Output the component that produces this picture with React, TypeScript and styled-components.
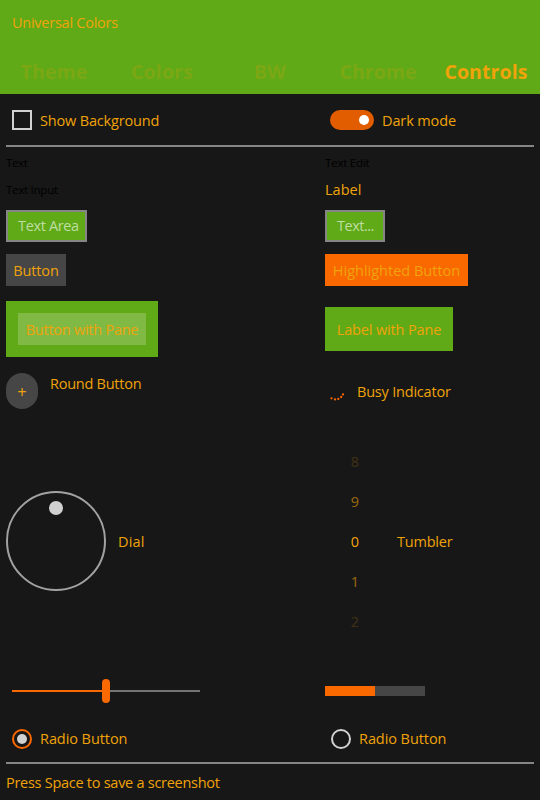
import React from "react";
import styled, { createGlobalStyle } from "styled-components";

const amber = "#f0a30a";
const green = "#60a917";
const orange = "#fa6800";
const grey = "#858585";

const GlobalStyle = createGlobalStyle`
  * { box-sizing: border-box; }
  body { margin: 0; background: #171717; }
`;

const Window = styled.div`
  display: flex;
  flex-direction: column;
  width: 540px;
  height: 800px;
  overflow: hidden;
  background: #171717;
  color: ${amber};
  font: 14.5px/20px "Open Sans", "Noto Sans", sans-serif;
  white-space: nowrap;
`;

const Label = styled.span<{ $spacing?: number; $size?: number; $color?: string; $drop?: number }>`
  color: ${(p) => p.$color ?? "inherit"};
  font-size: ${(p) => p.$size ?? 14.5}px;
  letter-spacing: ${(p) => p.$spacing ?? 0}px;
  padding-top: ${(p) => p.$drop ?? 0}px;
`;

const Header = styled.header`
  flex: none;
  height: 94px;
  background: ${green};
`;

const Title = styled.div`
  height: 46px;
  padding: 13px 12px 0;
`;

const Tabs = styled.nav`
  display: grid;
  grid-template-columns: repeat(5, 108px);
  height: 48px;
`;

const Tab = styled.div<{ $active?: boolean; $spacing: number }>`
  display: flex;
  align-items: center;
  justify-content: center;
  padding-top: 3px;
  font-size: 19.5px;
  font-weight: 700;
  letter-spacing: ${(p) => p.$spacing}px;
  color: ${(p) => (p.$active ? amber : "rgba(240, 163, 10, 0.2)")};
`;

const Options = styled.div`
  display: grid;
  grid-template-columns: 318px 1fr;
  flex: none;
  height: 51px;
  padding: 1px 12px 0;
`;

const Inline = styled.div<{ $gap?: number; $indent?: number; $top?: boolean }>`
  display: flex;
  align-items: ${(p) => (p.$top ? "flex-start" : "center")};
  gap: ${(p) => p.$gap ?? 8}px;
  padding-left: ${(p) => p.$indent ?? 0}px;
`;

const CheckBox = styled.div`
  width: 20px;
  height: 20px;
  border: 2px solid #d1d1d1;
`;

const Switch = styled.div`
  display: flex;
  align-items: center;
  justify-content: flex-end;
  width: 44px;
  height: 20px;
  padding-right: 5px;
  border-radius: 10px;
  background: #e15d00;
`;

const Knob = styled.div`
  width: 10px;
  height: 10px;
  border-radius: 50%;
  background: #fff;
`;

const Separator = styled.div`
  flex: none;
  height: 2px;
  margin: 0 6px;
  background: ${grey};
`;

const Controls = styled.main`
  display: grid;
  grid-template-columns: 319px 1fr;
  grid-template-rows: 29px 28px 44px 44px 74px 50px 250px 50px 46px;
  align-items: center;
  flex: none;
  height: 615px;
  padding-left: 6px;
`;

const Field = styled.div<{ $width: number }>`
  display: flex;
  align-items: center;
  width: ${(p) => p.$width}px;
  height: 32px;
  padding-left: 10px;
  border: 2px solid ${grey};
  background: ${green};
  color: #bfdda2;
`;

const Button = styled.div<{ $width: number; $fill?: string }>`
  display: flex;
  align-items: center;
  justify-content: center;
  width: ${(p) => p.$width}px;
  height: 32px;
  padding-top: 2px;
  background: ${(p) => p.$fill ?? "#464646"};
`;

const Pane = styled.div<{ $width: number; $height: number }>`
  display: flex;
  align-items: center;
  justify-content: center;
  width: ${(p) => p.$width}px;
  height: ${(p) => p.$height}px;
  background: ${green};
`;

const RoundButton = styled.div`
  display: flex;
  align-items: center;
  justify-content: center;
  width: 32px;
  height: 36px;
  padding-top: 2px;
  border-radius: 16px;
  background: #464646;
`;

const Dial = styled.div`
  display: flex;
  justify-content: center;
  width: 100px;
  height: 100px;
  padding-top: 8px;
  border: 2px solid #a2a2a2;
  border-radius: 50%;
`;

const DialHandle = styled.div`
  width: 14px;
  height: 14px;
  border-radius: 50%;
  background: #d1d1d1;
`;

const Tumbler = styled.div`
  display: grid;
  grid-template-rows: repeat(5, 40px);
  align-items: center;
  width: 60px;
  padding-top: 2px;
  text-align: center;
`;

const TumblerItem = styled.span<{ $fade: number }>`
  opacity: ${(p) => p.$fade};
`;

const Slider = styled.div`
  display: flex;
  align-items: center;
  width: 188px;
  height: 24px;
  margin-left: 6px;
`;

const Track = styled.div<{ $filled?: boolean }>`
  flex: 1;
  height: 2px;
  background: ${(p) => (p.$filled ? orange : "#747474")};
`;

const SliderHandle = styled.div`
  width: 8px;
  height: 24px;
  border-radius: 4px;
  background: ${orange};
`;

const Progress = styled.div`
  width: 100px;
  height: 10px;
  background: linear-gradient(to right, ${orange} 50%, #464646 50%);
`;

const Radio = styled.div<{ $checked?: boolean }>`
  display: flex;
  align-items: center;
  justify-content: center;
  width: 20px;
  height: 20px;
  border: 2px solid ${(p) => (p.$checked ? orange : "#d1d1d1")};
  border-radius: 50%;
`;

const RadioDot = styled(Knob)`
  background: #d1d1d1;
`;

const Footer = styled.footer`
  padding: 9px 6px 0;
`;

const digits = [
  { value: 8, fade: 0.18 },
  { value: 9, fade: 0.59 },
  { value: 0, fade: 1 },
  { value: 1, fade: 0.59 },
  { value: 2, fade: 0.18 },
];

const BusyIndicator = () => (
  <svg width="20" height="36" viewBox="325 373 20 36" fill={orange}>
    <circle cx="331.5" cy="398.3" r="1.15" />
    <circle cx="335" cy="399.4" r="1.15" />
    <circle cx="338.3" cy="398.9" r="1.15" />
    <circle cx="341.2" cy="397" r="1.15" />
    <circle cx="343" cy="394.4" r="1.15" />
  </svg>
);

export default function App() {
  return (
    <>
      <GlobalStyle />
      <Window>
        <Header>
          <Title><Label $spacing={-0.25}>Universal Colors</Label></Title>
          <Tabs>
            <Tab $spacing={0.1}>Theme</Tab>
            <Tab $spacing={0.15}>Colors</Tab>
            <Tab $spacing={0.1}>BW</Tab>
            <Tab $spacing={0.05}>Chrome</Tab>
            <Tab $spacing={0.1} $active>Controls</Tab>
          </Tabs>
        </Header>
        <Options>
          <Inline>
            <CheckBox />
            <Label $drop={2} $spacing={-0.17}>Show Background</Label>
          </Inline>
          <Inline>
            <Switch><Knob /></Switch>
            <Label $drop={2} $spacing={-0.12}>Dark mode</Label>
          </Inline>
        </Options>
        <Separator />
        <Controls>
          <Label $size={11.6} $spacing={-0.4} $color="#000" $drop={3}>Text</Label>
          <Label $size={11.6} $spacing={-0.25} $color="#000" $drop={3}>Text Edit</Label>

          <Label $size={11.6} $spacing={-0.3} $color="#000">Text Input</Label>
          <Label>Label</Label>

          <Field $width={81}><Label $spacing={-0.35}>Text Area</Label></Field>
          <Field $width={60}><Label $spacing={-0.48}>Text...</Label></Field>

          <Button $width={60}><Label $spacing={-0.15}>Button</Label></Button>
          <Button $width={143} $fill={orange}><Label>Highlighted Button</Label></Button>

          <Pane $width={152} $height={56}>
            <Button $width={128} $fill="#80ba45"><Label $spacing={-0.25}>Button with Pane</Label></Button>
          </Pane>
          <Pane $width={128} $height={44}><Label $drop={2} $spacing={-0.14}>Label with Pane</Label></Pane>

          <Inline $gap={12} $top>
            <RoundButton><Label $size={16.5}>+</Label></RoundButton>
            <Label $drop={1} $spacing={-0.25}>Round Button</Label>
          </Inline>
          <Inline $gap={12}>
            <BusyIndicator />
            <Label $drop={2} $spacing={-0.2}>Busy Indicator</Label>
          </Inline>

          <Inline $gap={12}>
            <Dial><DialHandle /></Dial>
            <Label $drop={2} $spacing={0.2}>Dial</Label>
          </Inline>
          <Inline $gap={12}>
            <Tumbler>
              {digits.map((d) => (
                <TumblerItem key={d.value} $fade={d.fade}>{d.value}</TumblerItem>
              ))}
            </Tumbler>
            <Label $drop={2} $spacing={-0.2}>Tumbler</Label>
          </Inline>

          <Slider>
            <Track $filled />
            <SliderHandle />
            <Track />
          </Slider>
          <Progress />

          <Inline $indent={6}>
            <Radio $checked><RadioDot /></Radio>
            <Label $spacing={-0.07}>Radio Button</Label>
          </Inline>
          <Inline $indent={6}>
            <Radio />
            <Label $spacing={-0.07}>Radio Button</Label>
          </Inline>
        </Controls>
        <Separator />
        <Footer><Label $spacing={-0.27}>Press Space to save a screenshot</Label></Footer>
      </Window>
    </>
  );
}
